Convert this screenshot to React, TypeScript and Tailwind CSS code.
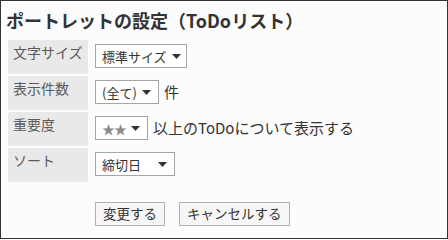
import React from "react";

const font = { fontFamily: '"Noto Sans CJK JP", "Noto Sans", sans-serif' };

function Arrow() {
  return (
    <svg width="9" height="5" viewBox="0 0 9 5" className="shrink-0">
      <path d="M0 0H9L4.5 5Z" fill="#333" />
    </svg>
  );
}

function Select({ children, width, spread }: { children: React.ReactNode; width: string; spread?: boolean }) {
  return (
    <div
      className={`${width} h-[24px] border border-[#a6a6a6] bg-white flex items-center pl-[6px] pr-[7px] gap-[5px] text-[13px] text-[#333] ${spread ? "justify-between" : ""}`}
    >
      <span className="leading-none whitespace-nowrap">{children}</span>
      <Arrow />
    </div>
  );
}

function Row({ label, children }: { label: string; children: React.ReactNode }) {
  return (
    <div className="flex gap-[7px]">
      <div className="w-[80px] h-[34px] bg-[#e9e9e9] pl-[5px] pt-[2px] text-[14px] leading-[20px] text-[#5a5a5a] shrink-0">
        {label}
      </div>
      <div className="pt-[4px] flex items-start gap-[5px] text-[15px] leading-[24px] text-[#333]">{children}</div>
    </div>
  );
}

export default function App() {
  return (
    <div style={font} className="w-[448px] h-[239px] border border-[#333] bg-[#fcfcfc] flex flex-col">
      <h1 className="pl-[5px] pt-[7px] text-[18px] leading-[24px] font-bold text-[#333] whitespace-nowrap">
        ポートレットの設定（ToDoリスト）
      </h1>
      <div className="mt-[8px] ml-[7px] flex flex-col gap-[2px]">
        <Row label="文字サイズ">
          <Select width="w-[92px]">標準サイズ</Select>
        </Row>
        <Row label="表示件数">
          <Select width="w-[64px]">(全て)</Select>
          <span>件</span>
        </Row>
        <Row label="重要度">
          <Select width="w-[53px]">
            <span className="text-[#8a8a8a] text-[13px] tracking-[-1px]">★★</span>
          </Select>
          <span>以上のToDoについて表示する</span>
        </Row>
        <Row label="ソート">
          <Select width="w-[80px]" spread>
            締切日
          </Select>
        </Row>
      </div>
      <div className="mt-[20px] ml-[94px] flex gap-[14px]">
        <button className="h-[24px] px-[7px] border border-[#b0b0b0] bg-[#f6f6f6] text-[13.5px] leading-none text-[#333]">
          変更する
        </button>
        <button className="h-[24px] px-[7px] border border-[#b0b0b0] bg-[#f6f6f6] text-[13.5px] leading-none text-[#333]">
          キャンセルする
        </button>
      </div>
    </div>
  );
}
